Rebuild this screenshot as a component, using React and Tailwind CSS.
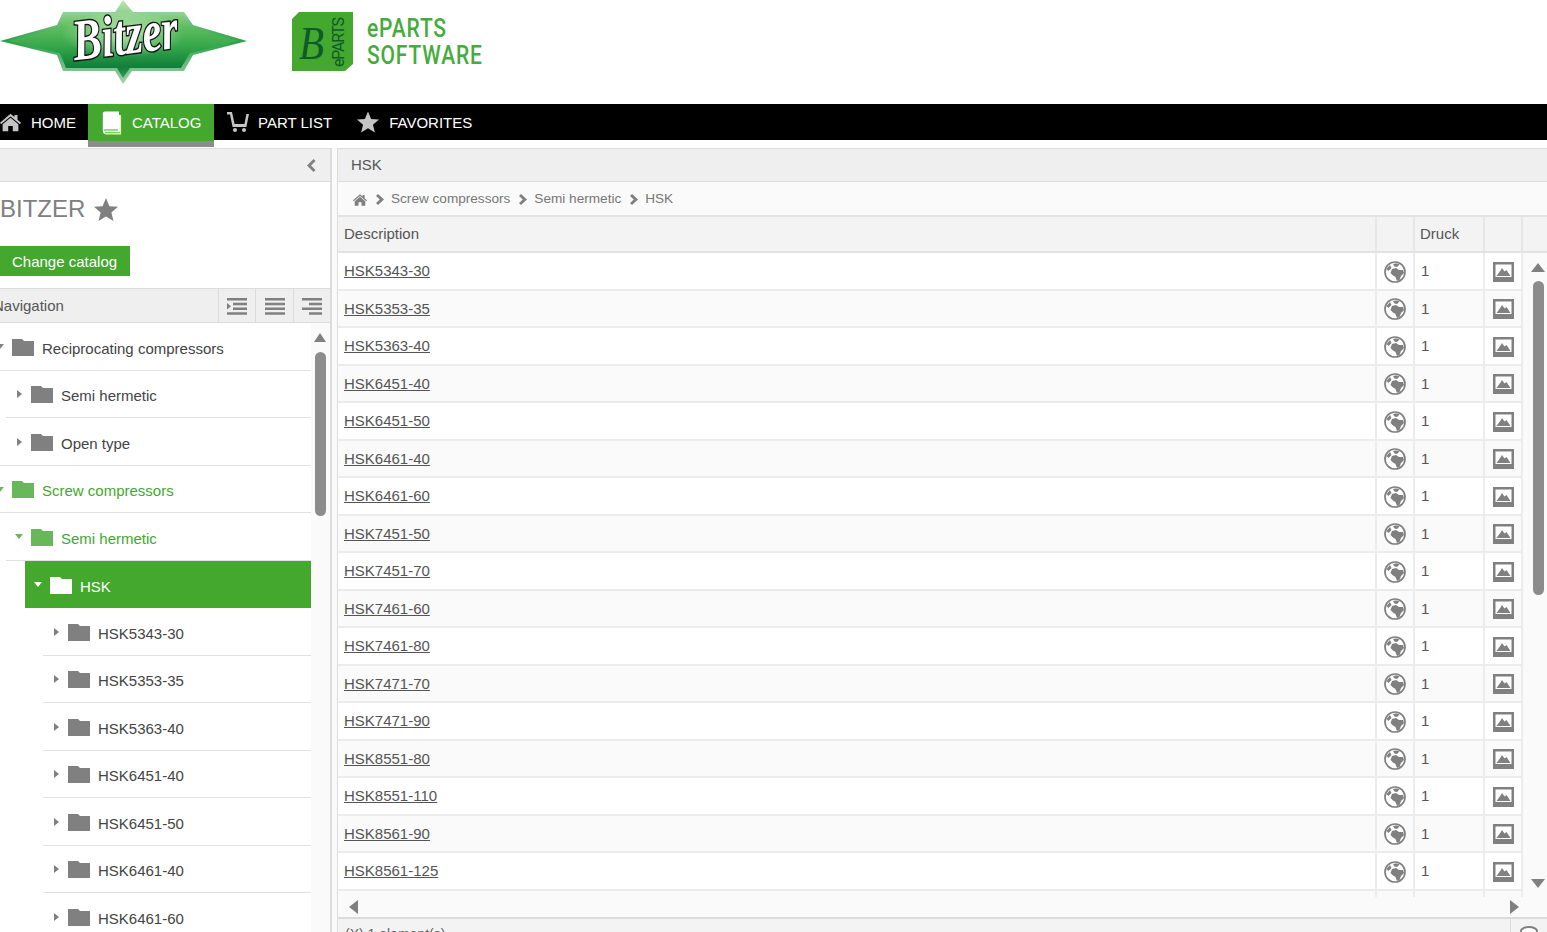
const font = { fontFamily: '"Liberation Sans", Arial, sans-serif' }

const parts = [
    "HSK5343-30", "HSK5353-35", "HSK5363-40", "HSK6451-40", "HSK6451-50", "HSK6461-40",
    "HSK6461-60", "HSK7451-50", "HSK7451-70", "HSK7461-60", "HSK7461-80", "HSK7471-70",
    "HSK7471-90", "HSK8551-80", "HSK8551-110", "HSK8561-90", "HSK8561-125",
]

const tree = [
    { label: "Reciprocating compressors", depth: 0, open: true },
    { label: "Semi hermetic", depth: 1 },
    { label: "Open type", depth: 1, last: true },
    { label: "Screw compressors", depth: 0, open: true, green: true },
    { label: "Semi hermetic", depth: 1, open: true, green: true },
    { label: "HSK", depth: 2, open: true, active: true },
    { label: "HSK5343-30", depth: 3 },
    { label: "HSK5353-35", depth: 3 },
    { label: "HSK5363-40", depth: 3 },
    { label: "HSK6451-40", depth: 3 },
    { label: "HSK6451-50", depth: 3 },
    { label: "HSK6461-40", depth: 3 },
    { label: "HSK6461-60", depth: 3 },
]

const indent = ["ml-0", "ml-[19px]", "ml-[38px]", "ml-[56px]"]

function Logo() {
    return (
        <svg width="248" height="86" viewBox="0 0 248 86" className="shrink-0">
            <defs>
                <linearGradient id="lg1" x1="0" y1="0" x2="0" y2="1">
                    <stop offset="0" stopColor="#a8dca0" />
                    <stop offset="0.3" stopColor="#5cbd5e" />
                    <stop offset="0.55" stopColor="#38a84c" />
                    <stop offset="0.85" stopColor="#0f7f3a" />
                    <stop offset="1" stopColor="#3d9a5e" />
                </linearGradient>
                <linearGradient id="lg2" x1="0" y1="0" x2="0" y2="1">
                    <stop offset="0" stopColor="#bfe6b5" />
                    <stop offset="0.5" stopColor="#2aa048" />
                    <stop offset="1" stopColor="#a5d4ad" />
                </linearGradient>
                <radialGradient id="lg3" cx="0.5" cy="0.45" r="0.5">
                    <stop offset="0" stopColor="#d8f2cf" stopOpacity="0.75" />
                    <stop offset="1" stopColor="#d8f2cf" stopOpacity="0" />
                </radialGradient>
            </defs>
            <polygon points="0,41 57,25 63,12 115,12 123,0 133,12 184,12 193,25 247,41 193,55 184,71 132,71 123,84 115,71 63,71 57,55" fill="url(#lg2)" />
            <polygon points="8,41 60,27 66,15 117,15 123,6 131,15 181,15 190,27 239,41 190,53 181,68 130,68 123,78 117,68 66,68 60,53" fill="url(#lg1)" />
            <ellipse cx="123" cy="36" rx="62" ry="24" fill="url(#lg3)" />
            <text x="73" y="54" fontFamily="Liberation Serif, serif" fontStyle="italic" fontWeight="700" fontSize="58" textLength="106" lengthAdjust="spacingAndGlyphs" fill="#fff" stroke="#161616" strokeWidth="3" paintOrder="stroke" transform="rotate(-7 125 42)">Bitzer</text>
        </svg>
    )
}

function PartsLogo() {
    return (
        <div className="flex items-center gap-[13px]">
            <svg width="62" height="60" viewBox="0 0 62 60" className="shrink-0">
                <polygon points="7,0 61,0 61,52 53,59 0,59 0,7" fill="#43a82d" />
                <text x="7" y="47" fontFamily="Liberation Serif, serif" fontStyle="italic" fontSize="46" textLength="25" lengthAdjust="spacingAndGlyphs" fill="#0f5a2a">B</text>
                <text transform="translate(52 55) rotate(-90)" fontFamily="Roboto, sans-serif" fontSize="16" textLength="50" fill="#0f5a2a">ePARTS</text>
            </svg>
            <div className="origin-left scale-x-[.84] text-[#46ab3c] text-[25px] leading-[27px] font-medium tracking-[1px]" style={{ fontFamily: "Roboto, sans-serif" }}>
                <div>ePARTS</div>
                <div>SOFTWARE</div>
            </div>
        </div>
    )
}

function HomeIcon({ className }) {
    return (
        <svg viewBox="0 0 24 20" className={className} fill="currentColor">
            <path d="M12 0 L16.5 3.8 V1.5 H20 V6.8 L24 10.4 L22.8 12 L12 3.2 L1.2 12 L0 10.4 Z" />
            <path d="M12 4.6 L21 12 V20 H14.6 V14 H9.4 V20 H3 V12 Z" />
        </svg>
    )
}

function BookIcon() {
    return (
        <svg width="20" height="24" viewBox="0 0 20 24" fill="none" className="shrink-0">
            <path d="M3 .5 C1.5 .5 .8 1.5 .8 3 V20 C.8 22 2 23 3.5 23 H19 V4 H17 V.5 Z" fill="#fff" />
            <path d="M3 21.8 H18 M2 19 H16" stroke="#43a82d" strokeWidth="1" />
            <path d="M18.5 4 V22.8 H3.5" stroke="#e8f2b8" strokeWidth="1.2" />
        </svg>
    )
}

function CartIcon() {
    return (
        <svg width="22" height="20" viewBox="0 0 22 20" fill="#c4c4c4" className="shrink-0">
            <path d="M0 0 H5 L7.6 12 H17.4 L19.4 2 H22 L19.4 15 H5.6 L3 2.4 H0 Z" />
            <circle cx="8" cy="18" r="2" />
            <circle cx="17" cy="18" r="2" />
        </svg>
    )
}

function Star({ className }) {
    return (
        <svg viewBox="0 0 24 23" fill="currentColor" className={className}>
            <polygon points="12,0 15.4,8.2 24,8.8 17.4,14.4 19.5,23 12,18.4 4.5,23 6.6,14.4 0,8.8 8.6,8.2" />
        </svg>
    )
}

function Folder({ className }) {
    return (
        <svg width="22" height="17" viewBox="0 0 22 17" fill="currentColor" className={`shrink-0 mt-[2px] ${className}`}>
            <path d="M0 0 H10 L12 2 H22 V17 H0 Z" />
        </svg>
    )
}

function GlobeIcon() {
    return (
        <svg width="22" height="22" viewBox="0 0 22 22" fill="#808080" className="shrink-0 mt-[2px]">
            <circle cx="11" cy="11" r="10" fill="#fff" stroke="#808080" strokeWidth="1.7" />
            <path d="M9 3 C11 2 14 2.5 15.5 3.5 L13 6 L10.5 5.5 Z" />
            <path d="M8 8 L12 7 L15 9 L19 9 L20 12 L17 15 L15.5 19 L13 20 L11.5 16 L9 14.5 L6.5 12 Z" />
            <path d="M2.5 8 L6 4 L7.5 7 L4.5 10 Z" />
        </svg>
    )
}

function ImageIcon() {
    return (
        <svg width="21" height="20" viewBox="0 0 21 20" className="shrink-0 mt-[2px] ml-[1px]">
            <rect width="21" height="20" fill="#808080" />
            <rect x="2.5" y="2.5" width="16" height="12.5" fill="#fff" />
            <path d="M3.5 14 L7.5 8.5 L9 6 L11.5 9.5 L13.5 8 L17.5 14 Z" fill="#808080" />
        </svg>
    )
}

function Caret({ dir, className }) {
    if (dir === "down") {
        return <span className={`w-0 h-0 border-x-[4.5px] border-x-transparent border-t-[5px] ${className}`} />
    }
    return <span className={`w-0 h-0 border-y-[4.5px] border-y-transparent border-l-[5px] ${className}`} />
}

function TreeRow({ item }) {
    const text = item.active ? "text-white" : item.green ? "text-[#43a82d]" : "text-[#444]"
    const folder = item.active ? "text-white" : item.green ? "text-[#68b85a]" : "text-[#808080]"
    const caret = item.active
        ? "border-t-white"
        : item.green
            ? "border-t-[#68b85a]"
            : item.open
                ? "border-t-[#808080]"
                : "border-l-[#808080]"
    const border = item.active ? "" : "border-b border-[#e2e2e2]"
    return (
        <div className={`h-[47.5px] shrink-0 box-border ${item.last ? border : ""}`}>
            <div className={`${indent[item.depth]} h-full flex items-center pl-[8px] box-border ${item.active ? "bg-[#43a82d]" : ""} ${item.last ? "" : border}`}>
                <span className="w-[10px] flex justify-center mr-[7px] mt-[1px]">
                    <Caret dir={item.open ? "down" : "right"} className={caret} />
                </span>
                <Folder className={folder} />
                <span className={`ml-[8px] text-[15px] mt-[5px] ${text}`}>{item.label}</span>
            </div>
        </div>
    )
}

function TableRow({ name, even }) {
    return (
        <div className={`h-[37.5px] shrink-0 flex border-b-2 border-[#ececec] box-border ${even ? "bg-[#fafafa]" : "bg-white"}`}>
            <div className="flex-1 flex items-center pl-[6px] border-r-2 border-[#ececec]">
                <a className="text-[15px] underline text-[#555] mt-[1px]">{name}</a>
            </div>
            <div className="w-[38px] flex items-center justify-center border-r-2 border-[#ececec]">
                <GlobeIcon />
            </div>
            <div className="w-[70px] flex items-center pl-[6px] border-r-2 border-[#ececec]">
                <span className="text-[15px] text-[#555] mt-[1px]">1</span>
            </div>
            <div className="w-[38px] flex items-center justify-center border-r-2 border-[#ececec]"><ImageIcon /></div>
        </div>
    )
}

export default function App() {
    return (
        <div className="h-screen w-full overflow-hidden bg-white flex flex-col" style={font}>
            <header className="h-[104px] shrink-0 flex items-start">
                <Logo />
                <div className="ml-[44px] mt-[12px]"><PartsLogo /></div>
            </header>

            <nav className="h-[36px] shrink-0 bg-black flex text-white text-[15px]">
                <div className="w-[88px] flex items-center">
                    <HomeIcon className="w-[21px] h-[19px] text-[#c4c4c4] shrink-0" />
                    <span className="ml-[10px] mt-[2px]">HOME</span>
                </div>
                <div className="w-[126px] h-[43px] bg-[#43a82d] border-b-[6px] border-[#8c8c8c] flex items-center pl-[14px] box-border">
                    <BookIcon />
                    <span className="ml-[10px] mt-[1px]">CATALOG</span>
                </div>
                <div className="flex items-center ml-[13px]">
                    <CartIcon />
                    <span className="ml-[9px] mt-[2px]">PART LIST</span>
                </div>
                <div className="flex items-center ml-[25px]">
                    <Star className="w-[22px] h-[22px] text-[#c4c4c4]" />
                    <span className="ml-[10px] mt-[2px]">FAVORITES</span>
                </div>
            </nav>

            <main className="flex-1 min-h-0 flex pt-[8px]">
                <aside className="w-[332px] shrink-0 flex flex-col border-r-2 border-[#dcdcdc] overflow-hidden">
                    <div className="h-[34px] shrink-0 bg-[#efefef] border-y border-[#dcdcdc] flex items-center justify-end pr-[14px] box-border">
                        <svg width="10" height="13" viewBox="0 0 10 13" fill="#808080"><path d="M7.5 0 L9.5 2 L5 6.5 L9.5 11 L7.5 13 L1 6.5 Z" /></svg>
                    </div>
                    <div className="h-[106px] shrink-0 flex flex-col items-start">
                        <div className="flex items-center mt-[12px] h-[30px]">
                            <span className="text-[24px] text-[#808080]">BITZER</span>
                            <Star className="w-[24px] h-[23px] text-[#808080] ml-[9px]" />
                        </div>
                        <button className="mt-[22px] w-[130px] h-[30px] bg-[#43a82d] text-white text-[15px] text-left pl-[12px] pt-[2px]">Change catalog</button>
                    </div>
                    <div className="h-[35px] shrink-0 bg-[#efefef] border-y border-[#dcdcdc] flex items-center box-border">
                        <span className="text-[15px] text-[#555] -ml-[7px] flex-1 mt-[2px]">Navigation</span>
                        <div className="w-[37px] h-full border-l border-[#dcdcdc] flex items-center justify-center pt-[1px]">
                            <svg width="20" height="17" viewBox="0 0 20 17" fill="#808080"><path d="M0 0 H20 V2.5 H0 Z M6 4.7 H20 V7.2 H6 Z M6 9.4 H20 V11.9 H6 Z M0 14.2 H20 V16.7 H0 Z M0 5 L4 8.2 L0 11.4 Z" /></svg>
                        </div>
                        <div className="w-[38px] h-full border-l border-[#dcdcdc] flex items-center justify-center pt-[1px]">
                            <svg width="20" height="17" viewBox="0 0 20 17" fill="#808080"><path d="M0 0 H20 V2.5 H0 Z M0 4.7 H20 V7.2 H0 Z M0 9.4 H20 V11.9 H0 Z M0 14.2 H20 V16.7 H0 Z" /></svg>
                        </div>
                        <div className="w-[37px] h-full border-l border-[#dcdcdc] flex items-center justify-center pt-[1px]">
                            <svg width="20" height="17" viewBox="0 0 20 17" fill="#808080"><path d="M0 0 H20 V2.5 H0 Z M7 4.7 H20 V7.2 H7 Z M0 9.4 H20 V11.9 H0 Z M7 14.2 H20 V16.7 H7 Z" /></svg>
                        </div>
                    </div>
                    <div className="flex-1 min-h-0 flex overflow-hidden">
                        <div className="w-[311px] shrink-0 flex flex-col overflow-hidden">
                            <div className="-ml-[13px] flex flex-col">
                                {tree.map((item, i) => <TreeRow key={i} item={item} />)}
                            </div>
                        </div>
                        <div className="flex-1 bg-[#fafafa] flex flex-col items-center pt-[10px]">
                            <span className="w-0 h-0 border-x-[6px] border-x-transparent border-b-[9px] border-b-[#808080] mr-[1px]" />
                            <div className="w-[11px] h-[164px] mt-[10px] rounded-full bg-[#8c8c8c]" />
                        </div>
                    </div>
                </aside>

                <div className="w-[5px] shrink-0 bg-[#fafafa]" />

                <section className="flex-1 min-w-0 flex flex-col border-l border-[#dcdcdc]">
                    <div className="h-[34px] shrink-0 bg-[#efefef] border-y border-[#dcdcdc] flex items-center pl-[13px] box-border">
                        <span className="text-[15px] text-[#555]">HSK</span>
                    </div>
                    <div className="h-[33px] shrink-0 bg-[#fafafa] flex items-center pl-[15px] pt-[2px] text-[13.6px] text-[#777]">
                        <HomeIcon className="w-[14px] h-[12px] text-[#808080] shrink-0" />
                        <Chevron />
                        <span>Screw compressors</span>
                        <Chevron />
                        <span>Semi hermetic</span>
                        <Chevron />
                        <span>HSK</span>
                    </div>
                    <div className="h-[38px] shrink-0 bg-[#f3f3f3] border-y-2 border-[#e2e2e2] flex box-border text-[15px] text-[#555]">
                        <div className="flex-1 flex items-center pl-[6px] border-r-2 border-[#e6e6e6]">Description</div>
                        <div className="w-[38px] border-r-2 border-[#e6e6e6]" />
                        <div className="w-[70px] flex items-center pl-[5px] border-r-2 border-[#e6e6e6]">Druck</div>
                        <div className="w-[38px] border-r-2 border-[#e6e6e6]" />
                        <div className="w-[24px]" />
                    </div>
                    <div className="h-[644px] shrink-0 flex overflow-hidden">
                        <div className="flex-1 min-w-0 flex flex-col overflow-hidden">
                            {parts.map((p, i) => <TableRow key={p} name={p} even={i % 2 === 1} />)}
                            <TableRow name="" even />
                        </div>
                        <div className="w-[24px] shrink-0 bg-[#fafafa] flex flex-col items-center pl-[6px] pt-[10px]">
                            <span className="w-0 h-0 border-x-[7px] border-x-transparent border-b-[9px] border-b-[#808080]" />
                            <div className="w-[11px] h-[314px] mt-[9px] rounded-full bg-[#8c8c8c]" />
                            <span className="mt-[284px] w-0 h-0 border-x-[7px] border-x-transparent border-t-[9px] border-t-[#808080]" />
                        </div>
                    </div>
                    <div className="h-[20px] shrink-0 bg-[#fafafa] flex items-center justify-between pl-[11px] pr-[28px]">
                        <span className="w-0 h-0 border-y-[7px] border-y-transparent border-r-[9px] border-r-[#808080]" />
                        <span className="w-0 h-0 border-y-[7px] border-y-transparent border-l-[9px] border-l-[#808080]" />
                    </div>
                    <div className="flex-1 bg-[#f3f3f3] border-t-2 border-[#dcdcdc] flex pl-[7px] text-[14px] text-[#666] overflow-hidden">
                        <span className="flex-1 mt-[5px]">(X) 1 element(s)</span>
                        <div className="w-[37px] border-l border-[#dcdcdc] flex justify-center pt-[7px]">
                            <span className="w-[18px] h-[10px] rounded-[50%] border-2 border-[#808080] bg-white" />
                        </div>
                    </div>
                </section>
            </main>
        </div>
    )
}

function Chevron() {
    return (
        <svg width="8" height="11" viewBox="0 0 8 11" fill="#808080" className="ml-[9px] mr-[7px] shrink-0">
            <path d="M2 0 L8 5.5 L2 11 L0 9 L3.8 5.5 L0 2 Z" />
        </svg>
    )
}
